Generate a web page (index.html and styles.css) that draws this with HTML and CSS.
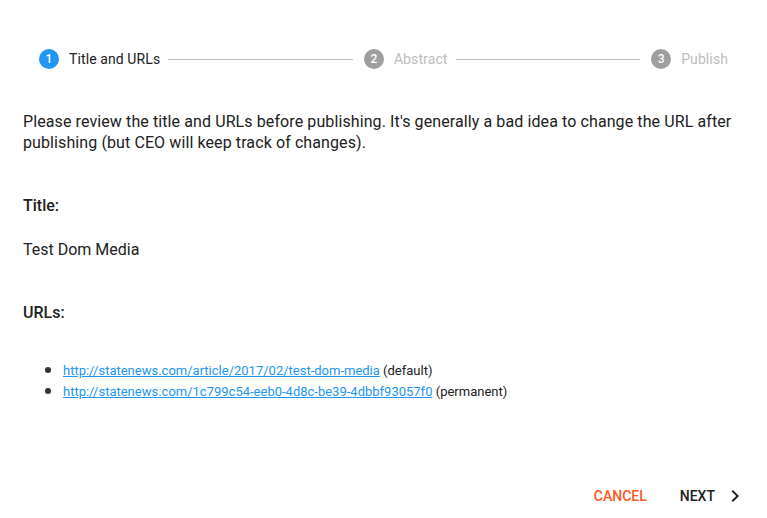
FILE: index.html
```html
<!DOCTYPE html>
<html lang="en">
	<head>
		<meta charset="UTF-8" />
		<meta name="viewport" content="width=device-width, initial-scale=1.0" />
		<title>Publish</title>
		<link rel="stylesheet" href="styles.css">
	</head>
	<body>
		<div class="wizard">
			<div class="stepper">
				<div class="step active">
					<span class="step-num">1</span>
					<span class="step-label">Title and URLs</span>
				</div>
				<div class="step-line"></div>
				<div class="step">
					<span class="step-num">2</span>
					<span class="step-label">Abstract</span>
				</div>
				<div class="step-line"></div>
				<div class="step">
					<span class="step-num">3</span>
					<span class="step-label">Publish</span>
				</div>
			</div>

			<p class="intro">Please review the title and URLs before publishing. It's generally a bad idea to change the URL after publishing (but CEO will keep track of changes).</p>

			<h3 class="field-title">Title:</h3>
			<p class="field-value">Test Dom Media</p>

			<h3 class="field-title urls-title">URLs:</h3>
			<ul class="url-list">
				<li><a href="#">http://statenews.com/article/2017/02/test-dom-media</a> (default)</li>
				<li><a href="#">http://statenews.com/1c799c54-eeb0-4d8c-be39-4dbbf93057f0</a> (permanent)</li>
			</ul>

			<div class="actions">
				<button class="btn btn-cancel">Cancel</button>
				<button class="btn btn-next">Next
					<svg width="24" height="24" viewBox="0 0 24 24"><path d="M8.6 16.6 13.2 12 8.6 7.4 10 6l6 6-6 6z" fill="#212121"/></svg>
				</button>
			</div>
		</div>
	</body>
</html>
```

FILE: styles.css
```css
* {
	margin: 0;
	padding: 0;
	box-sizing: border-box;
}

body {
	font-family: Roboto, "Liberation Sans", sans-serif;
	color: #212121;
	background: #fff;
}

.wizard {
	padding: 23px 23px 0 23px;
}

/* 步驟列 */
.stepper {
	display: flex;
	align-items: center;
	height: 72px;
	padding: 0 16px;
}

.step {
	display: flex;
	align-items: center;
}

.step-num {
	width: 20px;
	height: 20px;
	border-radius: 50%;
	background: #9e9e9e;
	color: #fff;
	font-size: 12px;
	font-weight: 500;
	line-height: 20px;
	text-align: center;
	margin-right: 10px;
}

.step-label {
	font-size: 14px;
	color: #bdbdbd;
	letter-spacing: 0.1px;
}

.step.active .step-num {
	background: #2196f3;
}
.step.active .step-label {
	color: #212121;
}

.step-line {
	flex: 1;
	height: 1px;
	background: #bdbdbd;
	margin: 0 11px 0 8px;
}

.intro {
	font-size: 16px;
	line-height: 21px;
	letter-spacing: 0.1px;
	margin-top: 16px;
}

.field-title {
	font-size: 16px;
	font-weight: 500;
	line-height: 21px;
	margin-top: 42px;
}

.field-value {
	font-size: 16px;
	line-height: 21px;
	margin-top: 23px;
}

.urls-title {
	margin-top: 42px;
}

.url-list {
	margin-top: 37px;
	padding-left: 40px;
	font-size: 13px;
	line-height: 21px;
	list-style: none;
}

.url-list li {
	position: relative;
}

/* 自訂較大的圓點 */
.url-list li::before {
	content: "";
	position: absolute;
	left: -18px;
	top: 7px;
	width: 6px;
	height: 6px;
	border-radius: 50%;
	background: #333;
}

.url-list a {
	color: #2196f3;
}

.actions {
	display: flex;
	justify-content: flex-end;
	align-items: center;
	margin-top: 76px;
	margin-right: -10px;
}

.btn {
	display: flex;
	align-items: center;
	border: 0;
	background: none;
	font-family: inherit;
	font-size: 14px;
	font-weight: 500;
	text-transform: uppercase;
	height: 36px;
	padding: 0 16px;
	cursor: pointer;
}

.btn-cancel {
	color: #ff5722;
	margin-right: 1px;
}

.btn-next {
	color: #212121;
	padding-right: 7px;
}

.btn-next svg {
	margin-left: 8px;
}
```
